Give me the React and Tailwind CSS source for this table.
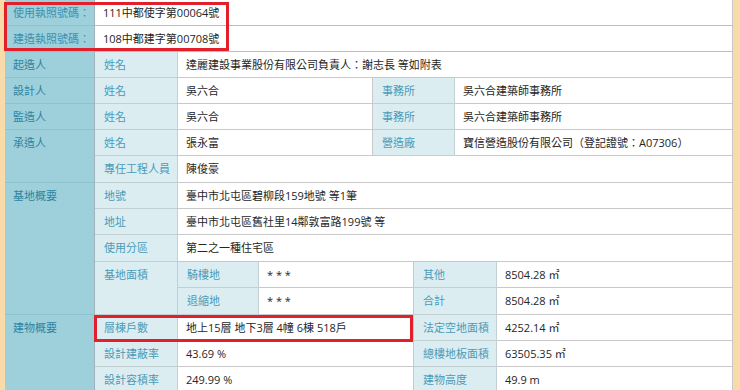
import React from "react";

const font = { fontFamily: '"Open Sans","Noto Sans CJK TC",sans-serif' };

function Cat({ className = "", children }) {
  return (
    <div className={"bg-[#9dd0db] border-r border-b border-r-[#9fb3ba] border-b-[#8cc3cf] pl-2 leading-[25px] text-[#2f84a0] whitespace-nowrap " + className}>
      {children}
    </div>
  );
}
function Lab({ className = "", children }) {
  return (
    <div className={"bg-[#dcedf2] border-r border-b border-[#c2cfd3] pl-[9px] leading-[25px] text-[#4b9bb6] whitespace-nowrap " + className}>
      {children}
    </div>
  );
}
function Val({ className = "", children }) {
  return (
    <div className={"bg-white border-r border-b border-[#c9c9c9] px-2 leading-[25px] text-[#262626] whitespace-nowrap overflow-hidden " + className}>
      {children}
    </div>
  );
}

export default function App() {
  return (
    <div className="relative w-[740px] h-[390px] overflow-hidden bg-[#f8dba9] pl-[5px] text-[11px]" style={font}>
      <div className="grid w-[728px] grid-cols-[90px_83px_81px_114px_41px_41px_42px_236px] grid-rows-[26px_26px_26px_26px_26px_26px_27px_26px_26px_27px_26px_27px_26px_26px_26px] border-r border-[#b7b2bd]">
        <Cat className="text-[#3d8fae]">使用執照號碼：</Cat>
        <Val className="col-span-7 border-b-[#bdbdbd]">111中都使字第00064號</Val>
        <Cat className="text-[#3d8fae]">建造執照號碼：</Cat>
        <Val className="col-span-7 border-b-[#bdbdbd]">108中都建字第00708號</Val>

        <Cat>起造人</Cat>
        <Lab>姓名</Lab>
        <Val className="col-span-6">達麗建設事業股份有限公司負責人：謝志長 等如附表</Val>

        <Cat>設計人</Cat>
        <Lab>姓名</Lab>
        <Val className="col-span-2">吳六合</Val>
        <Lab className="col-span-2">事務所</Lab>
        <Val className="col-span-2">吳六合建築師事務所</Val>

        <Cat>監造人</Cat>
        <Lab>姓名</Lab>
        <Val className="col-span-2">吳六合</Val>
        <Lab className="col-span-2">事務所</Lab>
        <Val className="col-span-2">吳六合建築師事務所</Val>

        <Cat className="row-span-2">承造人</Cat>
        <Lab>姓名</Lab>
        <Val className="col-span-2">張永富</Val>
        <Lab className="col-span-2">營造廠</Lab>
        <Val className="col-span-2">寶信營造股份有限公司（登記證號：A07306）</Val>
        <Lab>專任工程人員</Lab>
        <Val className="col-span-6">陳俊豪</Val>

        <Cat className="row-span-5">基地概要</Cat>
        <Lab>地號</Lab>
        <Val className="col-span-6">臺中市北屯區碧柳段159地號 等1筆</Val>
        <Lab>地址</Lab>
        <Val className="col-span-6">臺中市北屯區舊社里14鄰敦富路199號 等</Val>
        <Lab>使用分區</Lab>
        <Val className="col-span-6">第二之一種住宅區</Val>
        <Lab className="row-span-2">基地面積</Lab>
        <Lab>騎樓地</Lab>
        <Val className="col-span-2">* * *</Val>
        <Lab className="col-span-2">其他</Lab>
        <Val>8504.28 ㎡</Val>
        <Lab>退縮地</Lab>
        <Val className="col-span-2">* * *</Val>
        <Lab className="col-span-2">合計</Lab>
        <Val>8504.28 ㎡</Val>

        <Cat className="row-span-3">建物概要</Cat>
        <Lab>層棟戶數</Lab>
        <Val className="col-span-3">地上15層 地下3層 4幢 6棟 518戶</Val>
        <Lab className="col-span-2">法定空地面積</Lab>
        <Val>4252.14 ㎡</Val>
        <Lab>設計建蔽率</Lab>
        <Val className="col-span-3">43.69 %</Val>
        <Lab className="col-span-2">總樓地板面積</Lab>
        <Val>63505.35 ㎡</Val>
        <Lab>設計容積率</Lab>
        <Val className="col-span-3">249.99 %</Val>
        <Lab className="col-span-2">建物高度</Lab>
        <Val>49.9 m</Val>
      </div>

      <div className="absolute left-[4px] top-[2px] w-[225px] h-[49px] border-[3px] border-[#e1202b]" />
      <div className="absolute left-[94px] top-[315px] w-[319px] h-[27px] border-[3px] border-[#e1202b]" />
    </div>
  );
}
